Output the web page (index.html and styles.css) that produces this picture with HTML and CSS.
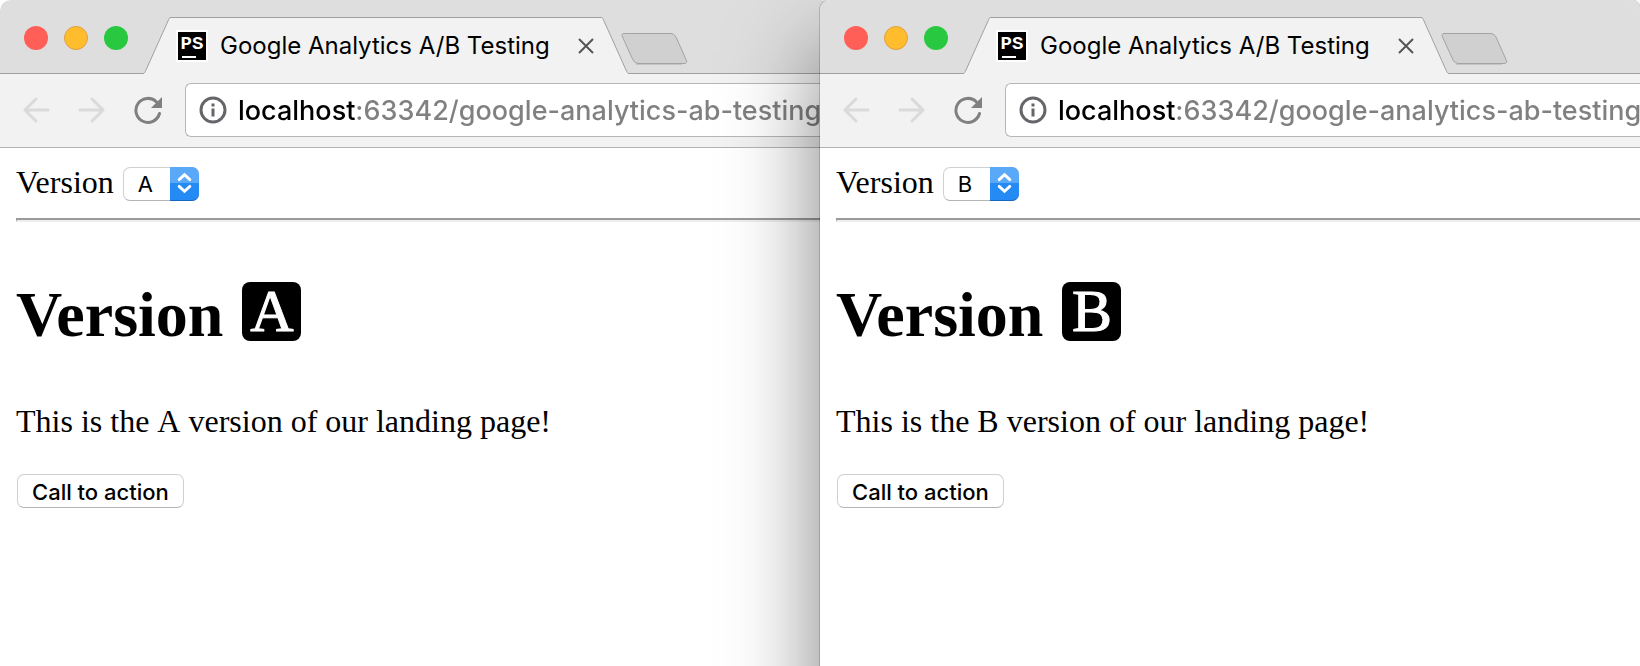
FILE: index.html
```html
<!DOCTYPE html>
<html lang="en">
<head>
<meta charset="utf-8">
<title>Google Analytics A/B Testing</title>
<link rel="stylesheet" href="styles.css">
</head>
<body>
<div class="desktop">
  <section class="window window-back">
    <header class="tab-strip">
      <div class="lights">
        <button class="light light-close" aria-label="Close window"></button>
        <button class="light light-minimize" aria-label="Minimize window"></button>
        <button class="light light-zoom" aria-label="Zoom window"></button>
      </div>
      <svg class="tab-edge" viewBox="0 0 28 57" aria-hidden="true"><path class="edge-fill" d="M0 57C2 56 2 55 3 53L25 4C26 1 27 .5 28 .5V57Z"/><path class="edge-line" d="M0 56.5C1.500 56.500 2 55 3 53L25 4C26 1.500 26.500 .5 28 .5"/></svg>
      <div class="tab">
        <span class="favicon"><span class="favicon-text">PS</span></span>
        <span class="tab-title">Google Analytics A/B Testing</span>
        <button class="tab-close" aria-label="Close tab"><svg width="16" height="16" viewBox="0 0 16 16"><path d="M1 1L15 15M15 1L1 15"/></svg></button>
      </div>
      <svg class="tab-edge" viewBox="0 0 28 57" aria-hidden="true"><path class="edge-fill" d="M28 57C26 56 26 55 25 53L3 4C2 1 1 .5 0 .5V57Z"/><path class="edge-line" d="M28 56.500C26.500 56.500 26 55 25 53L3 4C2 1.500 1.500 .5 0 .5"/></svg>
      <div class="strip-rest">
        <button class="new-tab" aria-label="New tab"><svg width="68" height="34" viewBox="0 0 68 34"><path class="new-tab-shade" d="M16 32.500H62"/><path class="new-tab-shape" d="M4 1.500H51Q54 1.500 56 5L66 27.500Q68 31.500 64 31.500H18Q15 31.500 13 28L2.500 5Q1 1.500 4 1.500Z"/></svg></button>
      </div>
    </header>
    <div class="toolbar">
      <button class="tool" aria-label="Back"><svg class="arrow" width="28" height="28" viewBox="0 0 28 28"><path d="M26 14H3M14 3L3 14L14 25"/></svg></button>
      <button class="tool" aria-label="Forward"><svg class="arrow" width="28" height="28" viewBox="0 0 28 28"><path d="M2 14H25M14 3L25 14L14 25"/></svg></button>
      <button class="tool" aria-label="Reload"><svg width="28" height="28" viewBox="0 0 28 28"><path class="reload-arc" d="M25.500 17.500A12 12 0 1 1 22.500 6"/><path class="reload-head" d="M28 1V12H17Z"/></svg></button>
      <div class="omnibox">
        <svg class="info" width="28" height="28" viewBox="0 0 28 28" aria-hidden="true"><circle cx="14" cy="14" r="12"/><path d="M12.500 12.500H15.500V20.500H12.500ZM12.500 7.500H15.500V10.500H12.500Z"/></svg>
        <input class="address" type="text" aria-label="Address" value="localhost:63342/google-analytics-ab-testing">
      </div>
    </div>
    <main class="page">
      <div class="picker">
        <label for="version-a">Version</label>
        <span class="select-box">
          <select id="version-a"><option selected>A</option><option>B</option></select>
          <svg class="stepper" width="29" height="34" viewBox="0 0 29 34" aria-hidden="true"><path d="M9 13L14.500 8L20 13M9 20L14.500 25L20 20"/></svg>
        </span>
      </div>
      <hr>
      <h1>Version <span class="badge">A</span></h1>
      <p>This is the A version of our landing page!</p>
      <button class="cta">Call to action</button>
    </main>
  </section>

  <section class="window window-front">
    <header class="tab-strip">
      <div class="lights">
        <button class="light light-close" aria-label="Close window"></button>
        <button class="light light-minimize" aria-label="Minimize window"></button>
        <button class="light light-zoom" aria-label="Zoom window"></button>
      </div>
      <svg class="tab-edge" viewBox="0 0 28 57" aria-hidden="true"><path class="edge-fill" d="M0 57C2 56 2 55 3 53L25 4C26 1 27 .5 28 .5V57Z"/><path class="edge-line" d="M0 56.5C1.500 56.500 2 55 3 53L25 4C26 1.500 26.500 .5 28 .5"/></svg>
      <div class="tab">
        <span class="favicon"><span class="favicon-text">PS</span></span>
        <span class="tab-title">Google Analytics A/B Testing</span>
        <button class="tab-close" aria-label="Close tab"><svg width="16" height="16" viewBox="0 0 16 16"><path d="M1 1L15 15M15 1L1 15"/></svg></button>
      </div>
      <svg class="tab-edge" viewBox="0 0 28 57" aria-hidden="true"><path class="edge-fill" d="M28 57C26 56 26 55 25 53L3 4C2 1 1 .5 0 .5V57Z"/><path class="edge-line" d="M28 56.500C26.500 56.500 26 55 25 53L3 4C2 1.500 1.500 .5 0 .5"/></svg>
      <div class="strip-rest">
        <button class="new-tab" aria-label="New tab"><svg width="68" height="34" viewBox="0 0 68 34"><path class="new-tab-shade" d="M16 32.500H62"/><path class="new-tab-shape" d="M4 1.500H51Q54 1.500 56 5L66 27.500Q68 31.500 64 31.500H18Q15 31.500 13 28L2.500 5Q1 1.500 4 1.500Z"/></svg></button>
      </div>
    </header>
    <div class="toolbar">
      <button class="tool" aria-label="Back"><svg class="arrow" width="28" height="28" viewBox="0 0 28 28"><path d="M26 14H3M14 3L3 14L14 25"/></svg></button>
      <button class="tool" aria-label="Forward"><svg class="arrow" width="28" height="28" viewBox="0 0 28 28"><path d="M2 14H25M14 3L25 14L14 25"/></svg></button>
      <button class="tool" aria-label="Reload"><svg width="28" height="28" viewBox="0 0 28 28"><path class="reload-arc" d="M25.500 17.500A12 12 0 1 1 22.500 6"/><path class="reload-head" d="M28 1V12H17Z"/></svg></button>
      <div class="omnibox">
        <svg class="info" width="28" height="28" viewBox="0 0 28 28" aria-hidden="true"><circle cx="14" cy="14" r="12"/><path d="M12.500 12.500H15.500V20.500H12.500ZM12.500 7.500H15.500V10.500H12.500Z"/></svg>
        <input class="address" type="text" aria-label="Address" value="localhost:63342/google-analytics-ab-testing">
      </div>
    </div>
    <main class="page">
      <div class="picker">
        <label for="version-b">Version</label>
        <span class="select-box">
          <select id="version-b"><option>A</option><option selected>B</option></select>
          <svg class="stepper" width="29" height="34" viewBox="0 0 29 34" aria-hidden="true"><path d="M9 13L14.500 8L20 13M9 20L14.500 25L20 20"/></svg>
        </span>
      </div>
      <hr>
      <h1>Version <span class="badge">B</span></h1>
      <p>This is the B version of our landing page!</p>
      <button class="cta">Call to action</button>
    </main>
  </section>
</div>
</body>
</html>
```
FILE: styles.css
```css
* { box-sizing: border-box; }

body {
  margin: 0;
  background: #fff;
  color: #000;
  font-family: "Liberation Serif", "Times New Roman", serif;
  font-size: 32px;
  line-height: 37px;
}

button, input, select {
  margin: 0;
  padding: 0;
  border: 0;
  background: none;
  color: inherit;
  font-family: Inter, "Liberation Sans", sans-serif;
}

svg { display: block; flex: none; fill: none; }

.desktop {
  display: grid;
  grid-template-columns: minmax(0, 1fr) minmax(0, 1fr);
  height: 100vh;
  overflow: hidden;
}

.window {
  min-height: 120vh;
  border-radius: 10px 10px 0 0;
  background: #fff;
}

/* The back window runs on under the front one's rounded corner. */
.window-back { margin-right: -12px; overflow: hidden; }

.window-front {
  position: relative;
  z-index: 1;
  box-shadow: 0 0 0 1px rgba(0, 0, 0, .16), 0 50px 90px rgba(0, 0, 0, .5);
}

.tab-strip {
  display: flex;
  align-items: flex-end;
  height: 74px;
  border-radius: 10px 10px 0 0;
  background: #dedede;
}

.lights {
  display: flex;
  gap: 16px;
  align-self: stretch;
  align-items: flex-start;
  width: 143px;
  padding: 26px 0 0 24px;
  border-bottom: 1px solid #a0a0a0;
}

.light { width: 24px; height: 24px; border-radius: 50%; }
.light-close { background: #ff5f57; }
.light-minimize { background: #ffbd2e; border: 1px solid #e0a03c; }
.light-zoom { background: #28c940; }

.tab-edge { width: 28px; height: 57px; }
.edge-fill { fill: #f2f2f2; }
.edge-line { stroke: #a0a0a0; stroke-width: 1; }

.tab {
  display: flex;
  align-items: center;
  width: 430px;
  height: 57px;
  padding: 0 7px 0 5px;
  border-top: 1px solid #a0a0a0;
  background: #f2f2f2;
}

.favicon {
  position: relative;
  flex: none;
  width: 32px;
  height: 32px;
  padding-top: 2px;
  border: 2px solid #fff;
  background: #000;
  color: #fff;
  font: bold 19px/20px "Liberation Mono", monospace;
  text-align: center;
}

.favicon::after {
  content: "";
  position: absolute;
  left: 4px;
  bottom: 2px;
  width: 14px;
  height: 2px;
  background: #fff;
}

.favicon-text { display: block; }

.tab-title {
  flex: 1;
  margin-left: 12px;
  font: 24px/32px Inter, "Liberation Sans", sans-serif;
  white-space: nowrap;
}

.tab-close { stroke: #555; stroke-width: 2; }

.strip-rest {
  flex: 1;
  align-self: stretch;
  padding-top: 32px;
  border-bottom: 1px solid #a0a0a0;
}

.new-tab { display: block; margin-left: -9px; }
.new-tab-shape { fill: #d0d0d0; stroke: #a3a3a3; }
.new-tab-shade { stroke: #c4c4c4; }

.toolbar {
  display: flex;
  align-items: center;
  gap: 28px;
  height: 74px;
  padding: 0 0 2px 22px;
  border-bottom: 1px solid #b4b4b4;
  background: #f2f2f2;
}

.tool { flex: none; }
.arrow { stroke: #dadada; stroke-width: 3; stroke-linecap: round; }
.reload-arc { stroke: #808080; stroke-width: 3; stroke-linecap: round; }
.reload-head { fill: #808080; }

.omnibox {
  display: flex;
  align-items: center;
  flex: 1;
  min-width: 0;
  height: 54px;
  margin-left: -5px;
  padding-left: 13px;
  border: 1px solid #b6b6b6;
  border-right: 0;
  border-radius: 6px 0 0 6px;
  background: #fff;
}

.info circle { stroke: #66666a; stroke-width: 3; }
.info path { fill: #66666a; }

.address {
  flex: 1;
  min-width: 0;
  height: 52px;
  margin-left: 11px;
  padding-top: 2px;
  outline: 0;
  background: linear-gradient(90deg, #000 117px, #808080 117px);
  background-clip: text;
  -webkit-background-clip: text;
  color: transparent;
  font-size: 27px;
  font-weight: 500;
}

.page { padding: 16px 0 16px 16px; }

.picker {
  display: flex;
  align-items: flex-start;
  gap: 9px;
  height: 38px;
  padding-top: 3px;
  line-height: 30px;
}

.select-box { position: relative; display: flex; }

select {
  appearance: none;
  width: 76px;
  height: 34px;
  padding: 0 0 0 14px;
  border: 1px solid #d0d0d0;
  border-bottom-color: #b4b4b4;
  border-radius: 7px;
  background: #fff;
  font-size: 22px;
}

.stepper {
  position: absolute;
  top: 0;
  right: 0;
  border-bottom: 1px solid #1468c4;
  border-radius: 0 7px 7px 0;
  background: linear-gradient(#5aa9f8 16px, #248bf5 16px);
  stroke: #fff;
  stroke-width: 3;
  stroke-linecap: round;
  pointer-events: none;
}

hr {
  height: 4px;
  margin: 16px 0 0;
  border: solid;
  border-width: 2px 0 2px 1px;
  border-color: #9a9a9a #eee #eee #9a9a9a;
}

h1 {
  display: flex;
  align-items: center;
  gap: 19px;
  margin: 45px 0 41px;
  font-size: 64px;
  line-height: 95px;
}

.badge {
  width: 59px;
  margin-bottom: 6px;
  border-radius: 8px;
  background: #000;
  color: #fff;
  font-size: 60px;
  font-weight: 400;
  line-height: 59px;
  text-align: center;
  -webkit-text-stroke: 1px #fff;
}

p { margin: 0 0 34px; font-kerning: none; }

.cta {
  display: block;
  height: 34px;
  margin-left: 1px;
  padding: 2px 14px 0;
  border: 1px solid #d0d0d0;
  border-bottom-color: #b4b4b4;
  border-radius: 7px;
  background: #fff;
  font-size: 22px;
  font-weight: 500;
}
```
